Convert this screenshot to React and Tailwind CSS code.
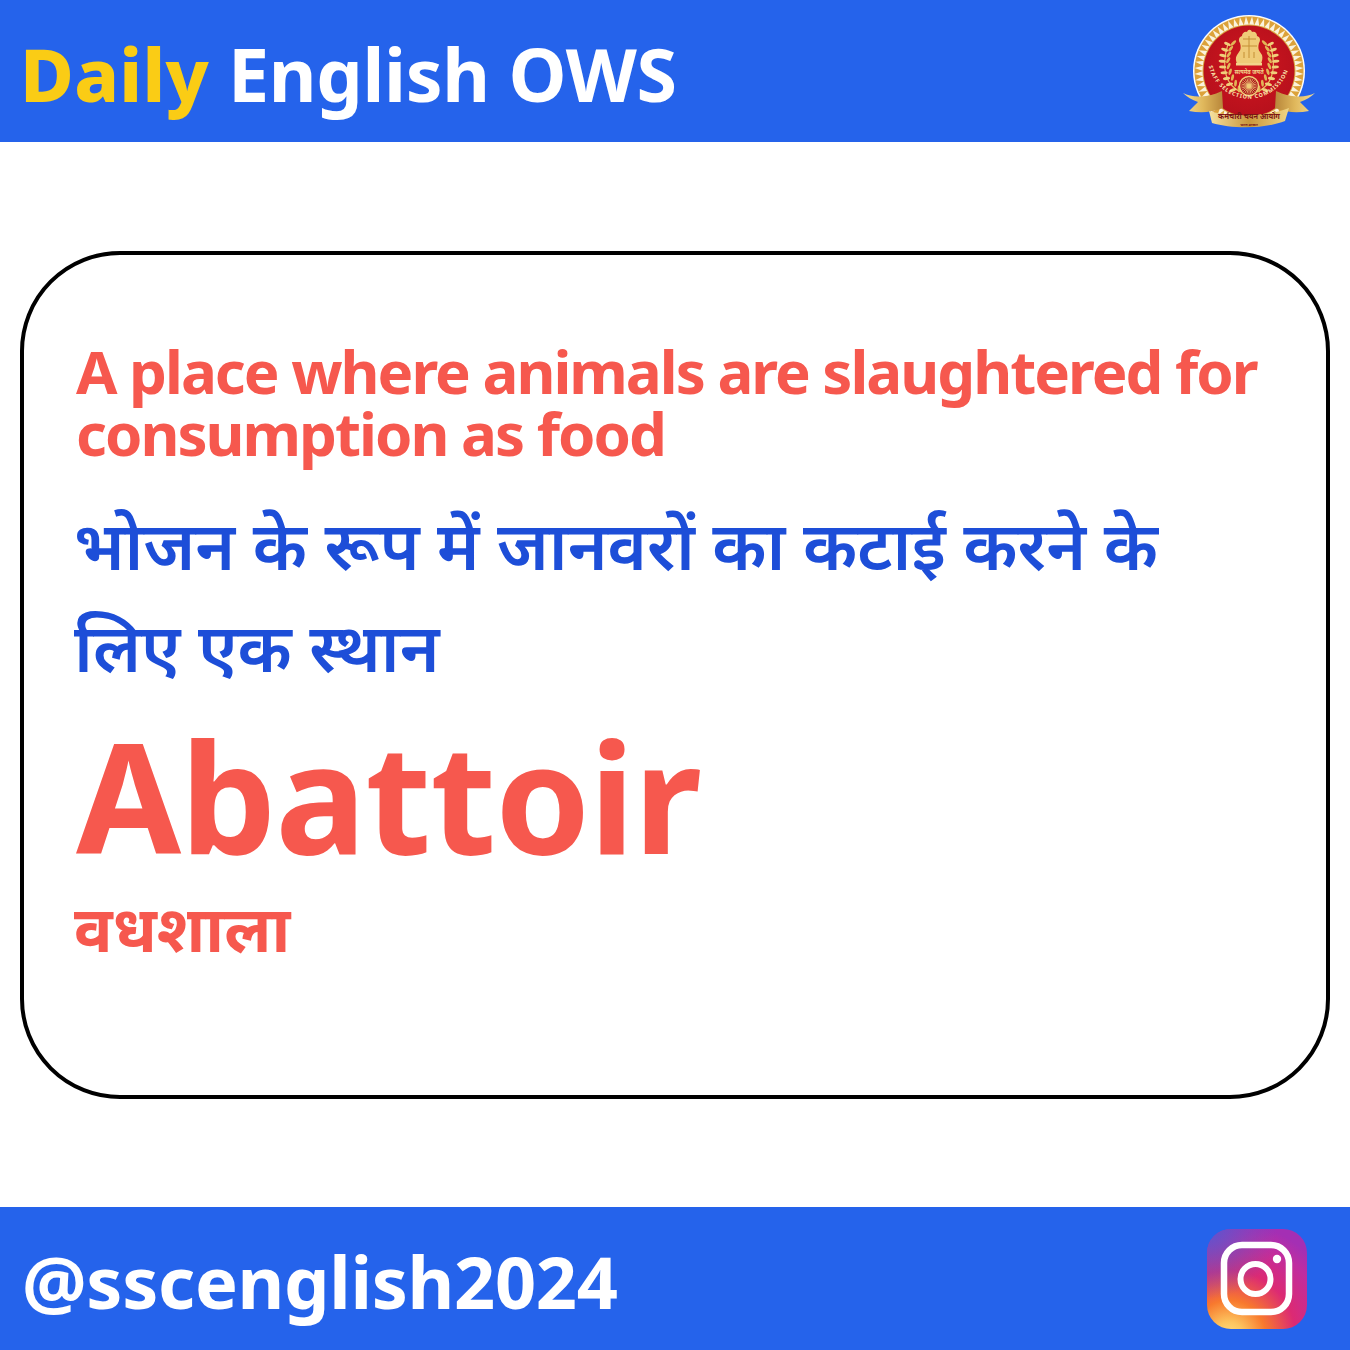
const teeth = Array.from({ length: 56 }, (_, i) => {
  const a = (i / 56) * Math.PI * 2;
  const d = Math.PI / 56;
  const cx = 1249, cy = 71;
  const p = (r, t) => `${(cx + r * Math.cos(t)).toFixed(2)},${(cy + r * Math.sin(t)).toFixed(2)}`;
  return `${p(54.5, a - d)} ${p(54.5, a + d)} ${p(46, a)}`;
});

const leaves = Array.from({ length: 9 }, (_, i) => i);

function Wreath({ flip }) {
  return (
    <g transform={flip ? "translate(2498 0) scale(-1 1)" : undefined}>
      <path d="M1241 92 C1227 86 1220 70 1228 44" fill="none" stroke="#e8c060" strokeWidth="1.2" />
      {leaves.map((i) => {
        const t = i / 8;
        const x = 1236 - 13 * Math.sin(t * 2.2) + 5 * t * t;
        const y = 90 - 46 * t;
        const rot = -50 + t * 45;
        return (
          <g key={i}>
            <ellipse cx={x - 3} cy={y} rx="3.6" ry="1.5" fill="#f0cf7a" transform={`rotate(${rot + 30} ${x - 3} ${y})`} />
            <ellipse cx={x + 3} cy={y - 1} rx="3.4" ry="1.4" fill="#e2b556" transform={`rotate(${rot - 40} ${x + 3} ${y - 1})`} />
          </g>
        );
      })}
    </g>
  );
}

function SscLogo() {
  return (
    <svg width="140" height="120" viewBox="1180 11 140 120" className="shrink-0">
      <defs>
        <linearGradient id="ribbon" x1="0" y1="0" x2="1" y2="0">
          <stop offset="0" stopColor="#f6e2a0" />
          <stop offset="0.5" stopColor="#c9973c" />
          <stop offset="1" stopColor="#f0d584" />
        </linearGradient>
        <linearGradient id="tail" x1="0" y1="0" x2="1" y2="0">
          <stop offset="0" stopColor="#f4dc94" />
          <stop offset="0.5" stopColor="#e0b85c" />
          <stop offset="1" stopColor="#b8863a" />
        </linearGradient>
        <linearGradient id="tailR" x1="0" y1="0" x2="1" y2="0">
          <stop offset="0" stopColor="#b8863a" />
          <stop offset="0.5" stopColor="#e0b85c" />
          <stop offset="1" stopColor="#f4dc94" />
        </linearGradient>
        <radialGradient id="disc" cx="0.5" cy="0.45" r="0.6">
          <stop offset="0" stopColor="#d0161f" />
          <stop offset="1" stopColor="#b5101c" />
        </radialGradient>
        <path id="arcText" d="M1208.5 64 A41 41 0 0 0 1289.5 64" fill="none" />
      </defs>
      <circle cx="1249" cy="71" r="56" fill="#fff" />
      <circle cx="1249" cy="71" r="55" fill="#fbf3dd" />
      {teeth.map((pts, i) => <polygon key={i} points={pts} fill="#dca23a" />)}
      <circle cx="1249" cy="71" r="46.5" fill="#d9a63f" />
      <circle cx="1249" cy="71" r="45.5" fill="url(#disc)" />
      <path d="M1240 43 C1238 40 1239 37 1242 36 C1242 33 1245 31 1247 32 C1248 29 1251 29 1252 32 C1255 31 1257 33 1257 36 C1260 37 1261 40 1259 43 C1258 46 1258 50 1260 52 L1262 55 C1263 58 1262 61 1261 64 L1237 64 C1236 61 1235 58 1237 55 L1239 52 C1241 50 1241 46 1240 43Z" fill="#efcb78" />
      <path d="M1243 39 L1256 39 M1242 46 L1257 46 M1249 36 L1249 58 M1244 52 L1244 58 M1254 52 L1254 58" stroke="#c48f34" strokeWidth="1" fill="none" />
      <rect x="1236" y="63" width="26" height="2.5" fill="#f2d48a" />
      <Wreath />
      <Wreath flip />
      <text x="1249" y="74" textAnchor="middle" fontSize="5.6" fontWeight="700" fill="#f2d48a" fontFamily="'Noto Sans',sans-serif">सत्यमेव जयते</text>
      <circle cx="1249" cy="86" r="9.5" fill="#a80f18" stroke="#efcb78" strokeWidth="1.6" />
      {Array.from({ length: 12 }, (_, i) => (
        <line key={i} x1="1249" y1="78" x2="1249" y2="94" stroke="#efcb78" strokeWidth="0.7" transform={`rotate(${i * 15} 1249 86)`} />
      ))}
      <circle cx="1249" cy="86" r="2.2" fill="#efcb78" />
      <path d="M1183 93 C1192 98 1208 98 1222 91 L1223 108 C1210 113 1200 113 1189 111 C1193 107 1196 104 1198 102 C1192 100 1187 97 1183 93Z" fill="url(#tail)" />
      <path d="M1315 93 C1306 98 1290 98 1276 91 L1275 108 C1288 113 1298 113 1309 111 C1305 107 1302 104 1300 102 C1306 100 1311 97 1315 93Z" fill="url(#tailR)" />
      <text fontSize="5.4" fontWeight="700" fill="#fbe7ae" letterSpacing="0.9" fontFamily="'Noto Sans',sans-serif">
        <textPath href="#arcText" startOffset="2">STAFF SELECTION COMMISSION</textPath>
      </text>
      <path d="M1209 111 C1228 117 1268 117 1289 108 L1285 121 C1265 129 1232 129 1212 123Z" fill="url(#ribbon)" />
      <text x="1249" y="119" textAnchor="middle" fontSize="7.4" fontWeight="700" fill="#7c1414" fontFamily="'Noto Sans',sans-serif">कर्मचारी चयन आयोग</text>
      <text x="1249" y="125.5" textAnchor="middle" fontSize="3.4" fontWeight="700" fill="#7c1414" fontFamily="'Noto Sans',sans-serif">भारत सरकार</text>
    </svg>
  );
}

function InstagramLogo() {
  return (
    <svg width="100" height="100" viewBox="0 0 100 100" className="shrink-0">
      <defs>
        <radialGradient id="igA" gradientUnits="userSpaceOnUse" cx="22" cy="108" r="115">
          <stop offset="0" stopColor="#ffe083" />
          <stop offset="0.13" stopColor="#fdc55f" />
          <stop offset="0.32" stopColor="#f8792e" />
          <stop offset="0.58" stopColor="#dc2a73" />
          <stop offset="0.85" stopColor="#c02da0" />
          <stop offset="1" stopColor="#a42fb4" />
        </radialGradient>
        <radialGradient id="igB" gradientUnits="userSpaceOnUse" cx="0" cy="0" r="70">
          <stop offset="0" stopColor="#4f5bd5" stopOpacity="0.9" />
          <stop offset="1" stopColor="#4f5bd5" stopOpacity="0" />
        </radialGradient>
      </defs>
      <rect width="100" height="100" rx="24" fill="url(#igA)" />
      <rect width="100" height="100" rx="24" fill="url(#igB)" />
      <rect x="17" y="16" width="65" height="67" rx="18" fill="none" stroke="#fff" strokeWidth="6.5" />
      <circle cx="48.5" cy="50" r="15" fill="none" stroke="#fff" strokeWidth="6" />
      <circle cx="70" cy="30" r="4.2" fill="#fff" />
    </svg>
  );
}

export default function App() {
  return (
    <div className="w-[1350px] h-[1350px] bg-white flex flex-col justify-between font-['Noto_Sans',sans-serif]">
      <header className="h-[142px] bg-[#2563eb] flex items-center justify-between pl-[20px] pr-[30px]">
        <h1 className="text-[73.5px] font-bold text-white leading-[1.2] mt-[6px] tracking-[-0.3px]"><span className="text-[#facc15] font-extrabold tracking-[0.3px]">Daily</span> English OWS</h1>
        <SscLogo />
      </header>
      <main className="mx-[20px] h-[848px] border-4 border-black rounded-[100px] flex flex-col justify-start pt-[85px] pl-[52px] pr-[40px]">
        <p className="text-[60px] font-bold text-[#f6584e] leading-[62px] tracking-[-2px]">A place where animals are slaughtered for consumption as food</p>
        <p className="text-[67.3px] font-semibold text-[#1d4ed8] leading-[102px] mt-[29px] pr-[60px] -ml-[2px]">भोजन के रूप में जानवरों का कटाई करने के लिए एक स्थान</p>
        <p className="text-[152px] font-bold text-[#f6584e] leading-[180px] tracking-[-1px] mt-[9px]">Abattoir</p>
        <p className="text-[64px] font-bold text-[#f6584e] leading-[70px] mt-[7px] -ml-[2px]">वधशाला</p>
      </main>
      <footer className="h-[143px] bg-[#2563eb] flex items-center justify-between pl-[22px] pr-[43px]">
        <p className="text-[72px] font-bold text-white leading-[1.2] mt-[6px] tracking-[-0.3px]">@sscenglish2024</p>
        <InstagramLogo />
      </footer>
    </div>
  );
}
